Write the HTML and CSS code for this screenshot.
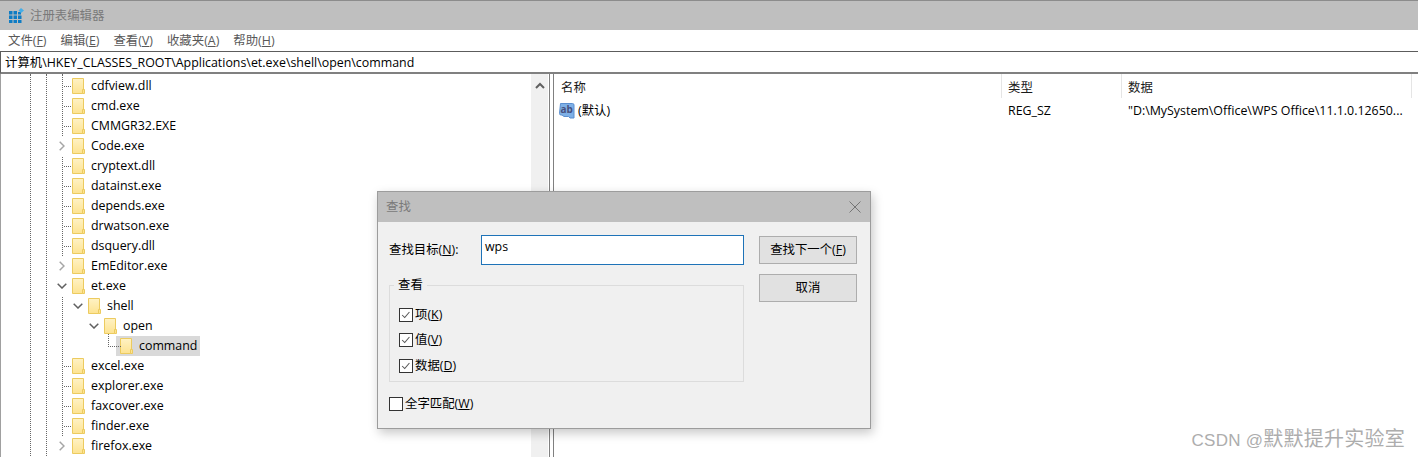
FILE: index.html
```html
<!DOCTYPE html>
<html lang="zh">
<head>
<meta charset="utf-8">
<title>注册表编辑器</title>
<link rel="stylesheet" href="styles.css">
</head>
<body>
<svg class="defs" width="0" height="0"><defs>
<linearGradient id="fg" x1="0" y1="0" x2="0" y2="1"><stop offset="0" stop-color="#fff2c4"/><stop offset="1" stop-color="#fde391"/></linearGradient>
<symbol id="folder" viewBox="0 0 13 16">
<path d="M.5.5h11v13.500h-1v1.500h-10z" fill="url(#fg)" stroke="#eccb5f"/>
<path d="M10.500 11.500h2v4h-2z" fill="#fde391" stroke="#eccb5f"/>
</symbol>
<symbol id="open" viewBox="0 0 10 6"><path d="M.7.7 5 5 9.300.7" fill="none" stroke="#606060" stroke-width="1.500"/></symbol>
<symbol id="closed" viewBox="0 0 6 10"><path d="M.7.7 5 5 .7 9.300" fill="none" stroke="#a6a6a6" stroke-width="1.500"/></symbol>
<symbol id="check" viewBox="0 0 14 14"><path d="M2.500 7 5.500 10 11 3.500" fill="none" stroke="#555" stroke-width="1.200"/></symbol>
</defs></svg>

<header class="titlebar">
  <svg class="appicon" width="15" height="15" viewBox="0 0 15 15">
    <path d="M0 3h3.500v3.500H0zM4.500 3H8v3.500H4.500zM9 4h3v2.500H9zM0 7.500h3.500V11H0zM4.500 7.500H8V11H4.500zM9 7.500h3.500V11H9zM0 12h3.500v3H0zM4.500 12H8v3H4.500zM9 12h3.500v3H9z" fill="#0f7cc4"/>
    <path d="M12 0l3 2.500-3 2.500-2.500-2.500z" fill="#45aee8"/>
  </svg>
  <span class="apptitle">注册表编辑器</span>
</header>
<nav class="menubar">
  <span class="menu">文件(<u>F</u>)</span>
  <span class="menu">编辑(<u>E</u>)</span>
  <span class="menu">查看(<u>V</u>)</span>
  <span class="menu">收藏夹(<u>A</u>)</span>
  <span class="menu">帮助(<u>H</u>)</span>
</nav>
<div class="address">计算机\HKEY_CLASSES_ROOT\Applications\et.exe\shell\open\command</div>

<main class="panes">
  <section class="tree">
    <div class="guides"><i class="guide"></i><i class="guide"></i><i class="guide"></i></div>
    <ul class="rows">
      <li class="row"><span class="exp dots"></span><svg class="fo"><use href="#folder"/></svg><span class="lbl">cdfview.dll</span></li>
      <li class="row"><span class="exp dots"></span><svg class="fo"><use href="#folder"/></svg><span class="lbl">cmd.exe</span></li>
      <li class="row"><span class="exp dots"></span><svg class="fo"><use href="#folder"/></svg><span class="lbl">CMMGR32.EXE</span></li>
      <li class="row"><span class="exp"><svg class="chev-c"><use href="#closed"/></svg></span><svg class="fo"><use href="#folder"/></svg><span class="lbl">Code.exe</span></li>
      <li class="row"><span class="exp dots"></span><svg class="fo"><use href="#folder"/></svg><span class="lbl">cryptext.dll</span></li>
      <li class="row"><span class="exp dots"></span><svg class="fo"><use href="#folder"/></svg><span class="lbl">datainst.exe</span></li>
      <li class="row"><span class="exp dots"></span><svg class="fo"><use href="#folder"/></svg><span class="lbl">depends.exe</span></li>
      <li class="row"><span class="exp dots"></span><svg class="fo"><use href="#folder"/></svg><span class="lbl">drwatson.exe</span></li>
      <li class="row"><span class="exp dots"></span><svg class="fo"><use href="#folder"/></svg><span class="lbl">dsquery.dll</span></li>
      <li class="row"><span class="exp"><svg class="chev-c"><use href="#closed"/></svg></span><svg class="fo"><use href="#folder"/></svg><span class="lbl">EmEditor.exe</span></li>
      <li class="row"><span class="exp"><svg class="chev-o"><use href="#open"/></svg></span><svg class="fo"><use href="#folder"/></svg><span class="lbl">et.exe</span></li>
      <li class="row l1"><span class="exp"><svg class="chev-o"><use href="#open"/></svg></span><svg class="fo"><use href="#folder"/></svg><span class="lbl">shell</span></li>
      <li class="row l2"><span class="exp"><svg class="chev-o"><use href="#open"/></svg></span><svg class="fo"><use href="#folder"/></svg><span class="lbl">open</span></li>
      <li class="row l3"><span class="exp elbow"></span><span class="selected"><svg class="fo"><use href="#folder"/></svg><span class="lbl">command</span></span></li>
      <li class="row"><span class="exp dots"></span><svg class="fo"><use href="#folder"/></svg><span class="lbl">excel.exe</span></li>
      <li class="row"><span class="exp dots"></span><svg class="fo"><use href="#folder"/></svg><span class="lbl">explorer.exe</span></li>
      <li class="row"><span class="exp dots"></span><svg class="fo"><use href="#folder"/></svg><span class="lbl">faxcover.exe</span></li>
      <li class="row"><span class="exp dots"></span><svg class="fo"><use href="#folder"/></svg><span class="lbl">finder.exe</span></li>
      <li class="row"><span class="exp"><svg class="chev-c"><use href="#closed"/></svg></span><svg class="fo"><use href="#folder"/></svg><span class="lbl">firefox.exe</span></li>
    </ul>
  </section>
  <div class="scrollbar">
    <svg class="uparrow" width="10" height="7" viewBox="0 0 10 7"><path d="M1 6 5 2l4 4" fill="none" stroke="#606060" stroke-width="2"/></svg>
  </div>
  <div class="splitter"></div>
  <section class="list">
    <div class="listhead">
      <span class="col c1">名称</span>
      <span class="col c2">类型</span>
      <span class="col c3">数据</span>
    </div>
    <div class="listrow">
      <span class="cell c1">
        <svg class="ab" width="16" height="16" viewBox="0 0 16 16">
          <path d="M1.500.5h12a1.500 1.500 0 0 1 1.500 1.500v13h-4l-1.500-1.500H5L3 12H2A1.500 1.500 0 0 1 .5 10.500z" fill="#7eb0e6" stroke="#5b8fd0"/>
          <text x="1.500" y="10" class="abtext">ab</text>
        </svg>(默认)</span>
      <span class="cell c2">REG_SZ</span>
      <span class="cell c3">"D:\MySystem\Office\WPS Office\11.1.0.12650...</span>
    </div>
  </section>
</main>

<div class="dialog">
  <div class="dlgtitle"><span>查找</span>
    <svg width="12" height="12" viewBox="0 0 12 12"><path d="M.5.500l11 11M11.500.500l-11 11" stroke="#757575" fill="none"/></svg>
  </div>
  <div class="dlgbody">
    <div class="dlgleft">
      <div class="target">
        <label class="tlabel">查找目标(<u>N</u>):</label>
        <div class="input">wps</div>
      </div>
      <fieldset class="group">
        <legend>查看</legend>
        <div class="cb"><svg class="box"><use href="#check"/></svg>项(<u>K</u>)</div>
        <div class="cb"><svg class="box"><use href="#check"/></svg>值(<u>V</u>)</div>
        <div class="cb"><svg class="box"><use href="#check"/></svg>数据(<u>D</u>)</div>
      </fieldset>
      <div class="cb whole"><span class="box"></span>全字匹配(<u>W</u>)</div>
    </div>
    <div class="dlgright">
      <div class="btn">查找下一个(<u>F</u>)</div>
      <div class="btn">取消</div>
    </div>
  </div>
</div>

<div class="watermark">CSDN @<span class="wmcjk">默默提升实验室</span></div>
</body>
</html>
```

FILE: styles.css
```css
* { box-sizing: border-box; }
html, body { margin: 0; padding: 0; }
body {
  width: 1418px;
  height: 457px;
  overflow: hidden;
  position: relative;
  background: #fff;
  color: #000;
  font: 12.4px/20px "Open Sans", "Noto Sans CJK SC", sans-serif;
}
.defs { position: absolute; }
u { text-underline-offset: 1px; }

.titlebar {
  height: 30px;
  background: #bfbfbf;
  border-top: 1px solid #8c8c8c;
  display: flex;
  align-items: center;
  padding-left: 9px;
  gap: 6px;
}
.apptitle { color: #7a7a7a; }

.menubar {
  height: 21px;
  display: flex;
  gap: 14px;
  padding-left: 8px;
  align-items: center;
  color: #595959;
}

.address {
  height: 23px;
  border-style: solid;
  border-width: 1px 0 2px 1px;
  border-color: #5c5c5c #000 #808080 #5c5c5c;
  padding-left: 4px;
  line-height: 22px;
}

.panes { display: flex; height: 384px; }
.tree { width: 531px; position: relative; overflow: hidden; padding-top: 2px; border-left: 1px solid #a0a0a0; }
.guides { position: absolute; inset: 0 auto 0 29px; display: flex; gap: 15px; }
.guide { width: 1px; height: 100%; border-left: 1px dotted #666; }
.rows { list-style: none; margin: 0; padding: 0 0 0 54px; position: relative; }
.row { height: 20px; display: flex; align-items: center; position: relative; }
.l1 { margin-left: 16px; }
.l2 { margin-left: 32px; }
.l3 { margin-left: 48px; }
.exp { width: 17px; height: 20px; display: flex; align-items: center; justify-content: center; flex: none; padding-right: 3px; background: #fff; }
.dots { justify-content: flex-end; padding-right: 1px; background: none; }
.dots::before { content: ""; width: 7px; border-top: 1px dotted #666; }
.elbow { position: relative; background: none; }
.elbow::before {
  content: "";
  position: absolute;
  left: 5px;
  top: -2px;
  width: 12px;
  height: 12px;
  border-left: 1px dotted #666;
  border-bottom: 1px dotted #666;
}
.chev-o { width: 10px; height: 6px; }
.chev-c { width: 6px; height: 10px; }
.fo { width: 13px; height: 16px; flex: none; margin-right: 6px; }
.lbl { white-space: nowrap; }
.selected { display: flex; align-items: center; height: 20px; background: #d9d9d9; padding: 0 3px 0 4px; margin-left: -4px; }

.scrollbar { width: 17px; background: #f0f0f0; display: flex; justify-content: center; align-items: flex-start; padding-top: 8px; }
.splitter { width: 5px; border-left: 1px solid #808080; border-right: 1px solid #808080; background: #fff; margin-left: 1px; }

.list { flex: 1; }
.listhead { height: 24px; display: flex; align-items: center; color: #1a1a1a; }
.col { height: 24px; line-height: 28px; border-right: 1px solid #e5e5e5; }
.col.c1 { padding: 4px 0 0 7px; }
.listrow { height: 20px; display: flex; align-items: center; margin-top: 3px; }
.c1 { width: 448px; padding-left: 6px; display: flex; align-items: center; gap: 0; }
.cell.c1 { padding-left: 5px; }
.c2 { width: 120px; padding-left: 6px; }
.c3 { width: 290px; padding-left: 6px; white-space: nowrap; }
.ab { margin-right: 3px; flex: none; }
.abtext { font: bold 10px "Open Sans", sans-serif; fill: #46507f; }

.dialog {
  position: absolute;
  left: 377px;
  top: 191px;
  width: 494px;
  height: 238px;
  background: #f0f0f0;
  border: 1px solid #9c9c9c;
  box-shadow: 2px 4px 10px rgba(0, 0, 0, .22);
}
.dlgtitle {
  height: 30px;
  background: #bfbfbf;
  color: #7a7a7a;
  display: flex;
  align-items: center;
  justify-content: space-between;
  padding: 0 9px 0 8px;
}
.dlgbody { display: flex; padding: 13px 13px 0 11px; gap: 15px; }
.dlgleft { width: 355px; }
.target { display: flex; align-items: center; height: 30px; }
.tlabel { width: 92px; }
.input {
  width: 263px;
  height: 30px;
  background: #fff;
  border: 1px solid #1e73b8;
  padding-left: 3px;
  line-height: 22px;
}
.group {
  margin: 10px 0 0;
  padding: 7px 0 0 9px;
  height: 107px;
  border: 1px solid #dcdcdc;
  min-width: 0;
}
.group legend { padding: 0 4px; margin-left: -5px; line-height: 20px; }
.cb { display: flex; align-items: center; height: 25.500px; line-height: 20px; }
.box {
  width: 14px;
  height: 14px;
  border: 1px solid #333;
  background: #fff;
  margin-right: 2px;
  flex: none;
}
.whole { margin-top: 9px; }
.dlgright { display: flex; flex-direction: column; gap: 10px; padding-top: 1px; }
.btn {
  width: 98px;
  height: 28px;
  background: #e1e1e1;
  border: 1px solid #adadad;
  text-align: center;
  line-height: 26px;
}

.watermark {
  position: absolute;
  right: 13px;
  top: 427px;
  color: #adadad;
  letter-spacing: .25px;
  font: 17px/24px "Liberation Sans", "Noto Sans CJK SC", sans-serif;
}
.wmcjk { font-size: 20px; }
```
